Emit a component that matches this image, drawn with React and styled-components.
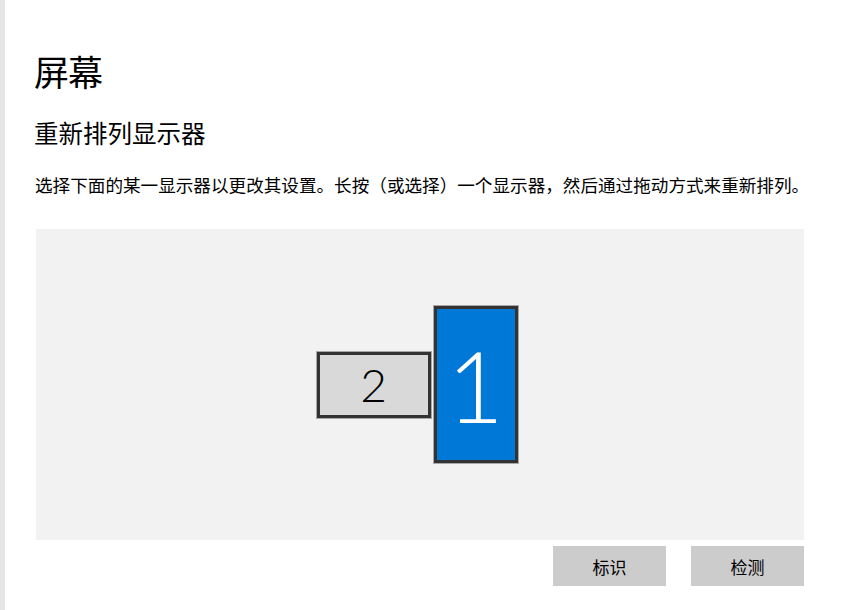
import styled, { createGlobalStyle } from "styled-components";

const GlobalStyle = createGlobalStyle`
  html, body {
    margin: 0;
    padding: 0;
    background: #ffffff;
  }
  body {
    font-family: "Noto Sans CJK SC", "Noto Sans", sans-serif;
    color: #000000;
  }
`;

const monitors = [
  { id: 2, width: 114, height: 66, active: false, offset: 46, fontSize: 46 },
  { id: 1, width: 84, height: 157, active: true, offset: 0, fontSize: 98 },
];

const App = () => {
  return (
    <Page>
      <GlobalStyle />
      <Strip />
      <Content>
        <Title>屏幕</Title>
        <Subtitle>重新排列显示器</Subtitle>
        <Description>
          选择下面的某一显示器以更改其设置。长按（或选择）一个显示器，然后通过拖动方式来重新排列。
        </Description>
        <Arrangement>
          <MonitorGroup>
            {monitors.map((m) => (
              <Monitor
                key={m.id}
                $w={m.width}
                $h={m.height}
                $active={m.active}
                $offset={m.offset}
              >
                <MonitorNumber $size={m.fontSize} $active={m.active}>
                  {m.id}
                </MonitorNumber>
              </Monitor>
            ))}
          </MonitorGroup>
        </Arrangement>
        <ButtonRow>
          <ActionButton>标识</ActionButton>
          <ActionButton>检测</ActionButton>
        </ButtonRow>
      </Content>
    </Page>
  );
};

export default App;

const Page = styled.div`
  display: flex;
  width: 843px;
  height: 610px;
  overflow: hidden;
  background: #ffffff;
`;

const Strip = styled.div`
  width: 5px;
  flex-shrink: 0;
  background: #e6e6e6;
`;

const Content = styled.div`
  display: flex;
  flex-direction: column;
  padding: 46px 0 0 31px;
  width: 768px;
`;

const Title = styled.h1`
  margin: 0 0 0 -2px;
  font-size: 35px;
  font-weight: 400;
  line-height: 50px;
  letter-spacing: -1px;
`;

const Subtitle = styled.h2`
  margin: 19px 0 0 -2px;
  font-size: 24.5px;
  font-weight: 400;
  line-height: 36px;
`;

const Description = styled.p`
  margin: 21px 0 0 -1px;
  font-size: 17.6px;
  line-height: 26px;
  white-space: nowrap;
`;

const Arrangement = styled.div`
  margin-top: 31px;
  height: 311px;
  background: #f2f2f2;
  display: flex;
  align-items: flex-start;
  justify-content: center;
`;

const MonitorGroup = styled.div`
  display: flex;
  align-items: flex-start;
  gap: 3px;
  margin-top: 77px;
  margin-left: -6px;
`;

const Monitor = styled.div`
  box-sizing: border-box;
  width: ${(p) => p.$w}px;
  height: ${(p) => p.$h}px;
  margin-top: ${(p) => p.$offset}px;
  background: ${(p) => (p.$active ? "#0078d7" : "#d9d9d9")};
  border: 3px solid #333333;
  outline: 1px solid #a8a8a8;
  display: flex;
  align-items: center;
  justify-content: center;
`;

const MonitorNumber = styled.span`
  font-family: "Lato", "Roboto", "Noto Sans", sans-serif;
  font-weight: 300;
  font-size: ${(p) => p.$size}px;
  line-height: 1;
  color: ${(p) => (p.$active ? "#ffffff" : "#000000")};
`;

const ButtonRow = styled.div`
  display: flex;
  justify-content: flex-end;
  gap: 25px;
  margin-top: 6px;
`;

const ActionButton = styled.button`
  width: 113px;
  height: 40px;
  border: none;
  background: #cccccc;
  font-family: "Noto Sans CJK SC", sans-serif;
  font-size: 17px;
  color: #000000;
  padding: 0;
`;
